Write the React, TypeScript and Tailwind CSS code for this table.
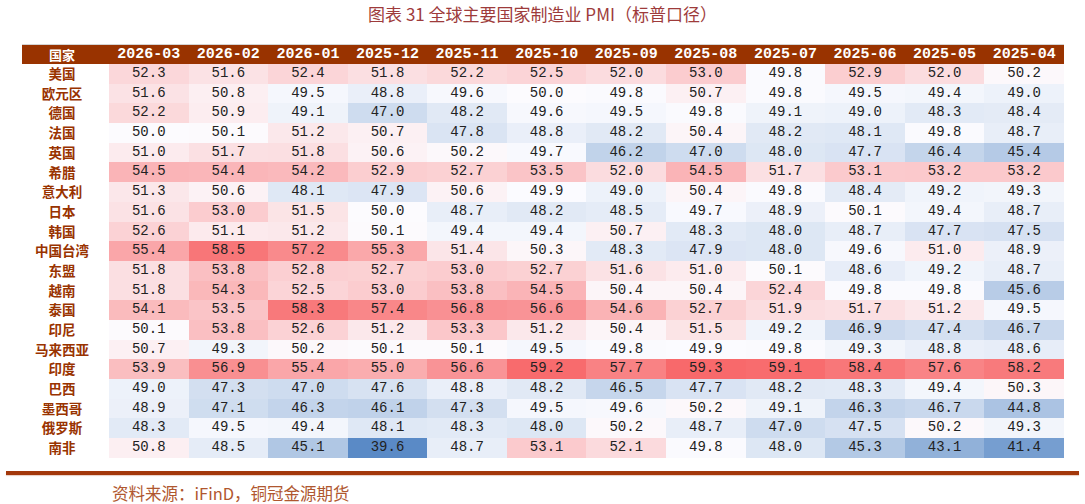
import React from "react";

const months = [
  "2026-03", "2026-02", "2026-01", "2025-12", "2025-11", "2025-10",
  "2025-09", "2025-08", "2025-07", "2025-06", "2025-05", "2025-04",
];

const rows: [string, number[]][] = [
  ["美国", [52.3, 51.6, 52.4, 51.8, 52.2, 52.5, 52.0, 53.0, 49.8, 52.9, 52.0, 50.2]],
  ["欧元区", [51.6, 50.8, 49.5, 48.8, 49.6, 50.0, 49.8, 50.7, 49.8, 49.5, 49.4, 49.0]],
  ["德国", [52.2, 50.9, 49.1, 47.0, 48.2, 49.6, 49.5, 49.8, 49.1, 49.0, 48.3, 48.4]],
  ["法国", [50.0, 50.1, 51.2, 50.7, 47.8, 48.8, 48.2, 50.4, 48.2, 48.1, 49.8, 48.7]],
  ["英国", [51.0, 51.7, 51.8, 50.6, 50.2, 49.7, 46.2, 47.0, 48.0, 47.7, 46.4, 45.4]],
  ["希腊", [54.5, 54.4, 54.2, 52.9, 52.7, 53.5, 52.0, 54.5, 51.7, 53.1, 53.2, 53.2]],
  ["意大利", [51.3, 50.6, 48.1, 47.9, 50.6, 49.9, 49.0, 50.4, 49.8, 48.4, 49.2, 49.3]],
  ["日本", [51.6, 53.0, 51.5, 50.0, 48.7, 48.2, 48.5, 49.7, 48.9, 50.1, 49.4, 48.7]],
  ["韩国", [52.6, 51.1, 51.2, 50.1, 49.4, 49.4, 50.7, 48.3, 48.0, 48.7, 47.7, 47.5]],
  ["中国台湾", [55.4, 58.5, 57.2, 55.3, 51.4, 50.3, 48.3, 47.9, 48.0, 49.6, 51.0, 48.9]],
  ["东盟", [51.8, 53.8, 52.8, 52.7, 53.0, 52.7, 51.6, 51.0, 50.1, 48.6, 49.2, 48.7]],
  ["越南", [51.8, 54.3, 52.5, 53.0, 53.8, 54.5, 50.4, 50.4, 52.4, 49.8, 49.8, 45.6]],
  ["泰国", [54.1, 53.5, 58.3, 57.4, 56.8, 56.6, 54.6, 52.7, 51.9, 51.7, 51.2, 49.5]],
  ["印尼", [50.1, 53.8, 52.6, 51.2, 53.3, 51.2, 50.4, 51.5, 49.2, 46.9, 47.4, 46.7]],
  ["马来西亚", [50.7, 49.3, 50.2, 50.1, 50.1, 49.5, 49.8, 49.9, 49.8, 49.3, 48.8, 48.6]],
  ["印度", [53.9, 56.9, 55.4, 55.0, 56.6, 59.2, 57.7, 59.3, 59.1, 58.4, 57.6, 58.2]],
  ["巴西", [49.0, 47.3, 47.0, 47.6, 48.8, 48.2, 46.5, 47.7, 48.2, 48.3, 49.4, 50.3]],
  ["墨西哥", [48.9, 47.1, 46.3, 46.1, 47.3, 49.5, 49.6, 50.2, 49.1, 46.3, 46.7, 44.8]],
  ["俄罗斯", [48.3, 49.5, 49.4, 48.1, 48.3, 48.0, 50.2, 48.7, 47.0, 47.5, 50.2, 49.3]],
  ["南非", [50.8, 48.5, 45.1, 39.6, 48.7, 53.1, 52.1, 49.8, 48.0, 45.3, 43.1, 41.4]],
];

// excel-style red / white / blue scale over the whole table
const all = rows.flatMap((r) => r[1]).sort((a, b) => a - b);
const lo = all[0];
const hi = all[all.length - 1];
const mid = (all[all.length / 2 - 1] + all[all.length / 2]) / 2;

const BLUE = [90, 138, 198];
const WHITE = [252, 252, 255];
const RED = [248, 105, 107];

function mix(a: number[], b: number[], t: number) {
  const c = a.map((v, i) => Math.round(v + (b[i] - v) * t));
  return `rgb(${c[0]}, ${c[1]}, ${c[2]})`;
}

function cellColor(v: number) {
  if (v >= mid) return mix(WHITE, RED, (v - mid) / (hi - mid));
  return mix(WHITE, BLUE, (mid - v) / (mid - lo));
}

const cjk = "font-['Noto_Sans_CJK_SC',sans-serif]";

export default function App() {
  return (
    <div className="w-[1085px] h-[504px] bg-white overflow-hidden">
      <div className={`h-[44px] pt-[4px] text-center text-[17px] leading-[20px] text-[#9e3b3b] ${cjk}`}>
        图表 31 全球主要国家制造业 PMI（标普口径）
      </div>

      <div className="ml-[22px] w-[1042px] border-t border-[#d4d4d4]">
        <div className="flex h-[19px] items-center bg-[#993300] text-white">
          <div className={`w-[87px] pr-[7px] text-center text-[13px] font-bold leading-[19px] ${cjk}`}>国家</div>
          {months.map((m) => (
            <div
              key={m}
              className="w-[79.6px] text-center text-[15px] font-bold leading-[19px] font-['Liberation_Mono',monospace]"
            >
              {m}
            </div>
          ))}
        </div>

        {rows.map(([name, vals]) => (
          <div key={name} className="flex h-[19.7px]">
            <div
              className={`flex w-[87px] items-center justify-center pr-[7px] text-[13.5px] font-bold leading-none text-[#993300] ${cjk}`}
            >
              {name}
            </div>
            {vals.map((v, i) => (
              <div
                key={i}
                className="w-[79.6px] text-center text-[14px] leading-[19.7px] text-[#222222] font-['Liberation_Mono',monospace]"
                style={{ backgroundColor: cellColor(v) }}
              >
                {v.toFixed(1)}
              </div>
            ))}
          </div>
        ))}
      </div>

      <div className="mt-[13px] ml-[6px] w-[1073px] h-[4px] bg-[#a3380b] shadow-[0_1px_1px_rgba(163,56,11,0.25)]" />

      <div className={`mt-[7px] pl-[112px] text-[16.5px] leading-[22px] text-[#b0572f] ${cjk}`}>
        资料来源：iFinD，铜冠金源期货
      </div>
    </div>
  );
}
